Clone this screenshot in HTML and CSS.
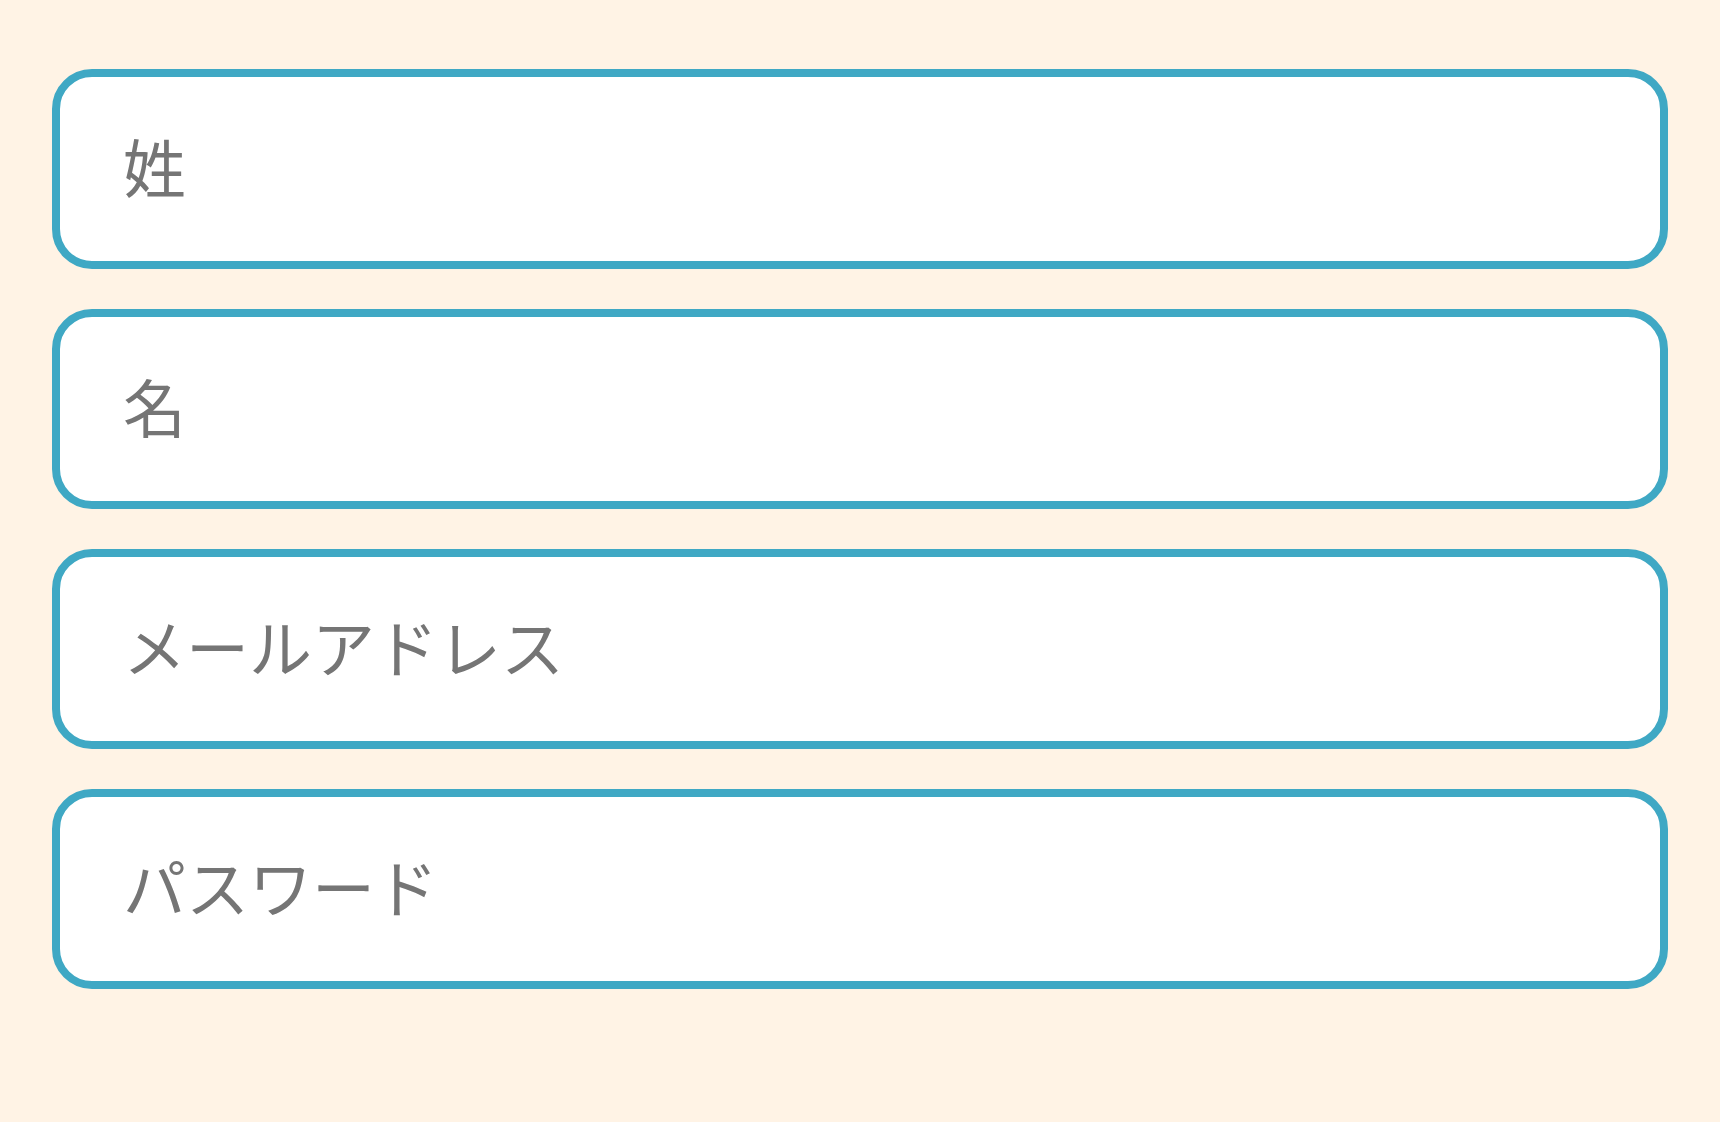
FILE: index.html
```html
<!DOCTYPE html><html lang="ja">
<head>
  <meta charset="UTF-8" />
  <meta name="viewport" content="width=device-width, initial-scale=1.0" />
  <title>登録</title>
  <link rel="stylesheet" href="styles.css">
</head>
<body>
  <form class="signup-form">
    <div class="field">姓</div>
    <div class="field">名</div>
    <div class="field">メールアドレス</div>
    <div class="field">パスワード</div>
  </form>
</body>
</html>
```

FILE: styles.css
```css
body {
  font-family: "Noto Sans CJK JP", "Noto Sans", sans-serif;
  background-color: #fff3e5;
  margin: 0;
  padding: 69px 52px;
}
.signup-form {
  display: flex;
  flex-direction: column;
  gap: 40px;
}
.field {
  box-sizing: border-box;
  height: 200px;
  border: 8px solid #3fa8c4;
  border-radius: 40px;
  background: #ffffff;
  padding: 0 0 10px 63px;
  display: flex;
  align-items: center;
  font-size: 63px;
  color: #757575;
}
```
